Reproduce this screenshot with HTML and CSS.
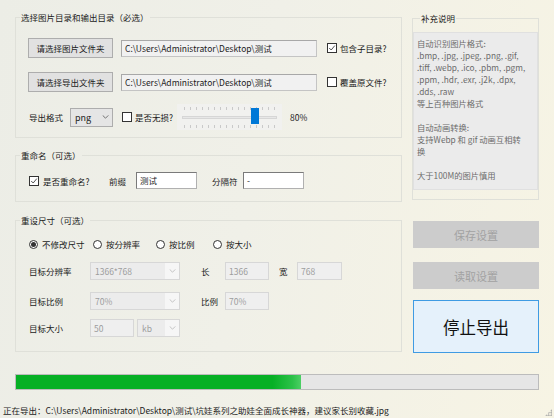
FILE: index.html
```html
<!DOCTYPE html>
<html lang="zh-CN">
<head>
<meta charset="utf-8">
<title>图片格式转换</title>
<link rel="stylesheet" href="styles.css">
</head>
<body>
<div class="window">
  <div class="main">
    <div class="left">
      <fieldset class="group g1">
        <legend>选择图片目录和输出目录（必选）</legend>
        <div class="body b1">
          <div class="row r-pick">
            <div class="btn pick">请选择图片文件夹</div>
            <div class="tb path">C:\Users\Administrator\Desktop\测试</div>
            <span class="chk on"><svg viewBox="0 0 10 10" width="8" height="8"><polyline points="1.5,5 4,7.5 8.5,2" fill="none" stroke="#2a2a2a" stroke-width="1"/></svg></span>
            <span class="chk-l">包含子目录?</span>
          </div>
          <div class="row r-pick r2">
            <div class="btn pick">请选择导出文件夹</div>
            <div class="tb path">C:\Users\Administrator\Desktop\测试</div>
            <span class="chk"></span>
            <span class="chk-l">覆盖原文件?</span>
          </div>
          <div class="row r-fmt">
            <span class="l-fmt">导出格式</span>
            <div class="combo fmt"><span class="cv">png</span><span class="arr"><svg viewBox="0 0 8 5" width="7" height="4"><polyline points="0.5,0.5 4,4 7.5,0.5" fill="none" stroke="#555" stroke-width="1"/></svg></span></div>
            <span class="chk c-loss"></span>
            <span class="chk-l l-loss">是否无损?</span>
            <div class="slider"><div class="track"></div><div class="thumb"></div></div>
            <span class="pct">80%</span>
          </div>
        </div>
      </fieldset>

      <fieldset class="group g2">
        <legend>重命名（可选）</legend>
        <div class="body b2">
          <div class="row r-ren">
            <span class="chk c-ren on"><svg viewBox="0 0 10 10" width="8" height="8"><polyline points="1.5,5 4,7.5 8.5,2" fill="none" stroke="#2a2a2a" stroke-width="1"/></svg></span>
            <span class="l-ren">是否重命名?</span>
            <span class="l-pre">前缀</span>
            <div class="tb edit w-pre">测试</div>
            <span class="l-sep">分隔符</span>
            <div class="tb edit w-sep">-</div>
          </div>
        </div>
      </fieldset>

      <fieldset class="group g3">
        <legend>重设尺寸（可选）</legend>
        <div class="body b3">
          <div class="row r-radio">
            <span class="radio on"></span><span class="rl w1">不修改尺寸</span>
            <span class="radio"></span><span class="rl w2">按分辨率</span>
            <span class="radio"></span><span class="rl w3">按比例</span>
            <span class="radio"></span><span class="rl">按大小</span>
          </div>
          <div class="row r-size r-res">
            <span class="l-target">目标分辨率</span>
            <div class="combo dis w-combo"><span class="cv">1366*768</span><span class="arr"><svg viewBox="0 0 8 5" width="7" height="4"><polyline points="0.5,0.5 4,4 7.5,0.5" fill="none" stroke="#b8b8b8" stroke-width="1"/></svg></span></div>
            <span class="l-short">长</span>
            <div class="tb dis w44">1366</div>
            <span class="l-wide">宽</span>
            <div class="tb dis w45">768</div>
          </div>
          <div class="row r-size r-ratio">
            <span class="l-target">目标比例</span>
            <div class="combo dis w-combo"><span class="cv">70%</span><span class="arr"><svg viewBox="0 0 8 5" width="7" height="4"><polyline points="0.5,0.5 4,4 7.5,0.5" fill="none" stroke="#b8b8b8" stroke-width="1"/></svg></span></div>
            <span class="l-short">比例</span>
            <div class="tb dis w44">70%</div>
          </div>
          <div class="row r-size r-kb">
            <span class="l-target">目标大小</span>
            <div class="tb dis w44">50</div>
            <div class="combo dis w-unit"><span class="cv">kb</span><span class="arr"><svg viewBox="0 0 8 5" width="7" height="4"><polyline points="0.5,0.5 4,4 7.5,0.5" fill="none" stroke="#b8b8b8" stroke-width="1"/></svg></span></div>
          </div>
        </div>
      </fieldset>
    </div>

    <div class="right">
      <fieldset class="group notes">
        <legend>补充说明</legend>
        <div class="note-box">自动识别图片格式:<br>.bmp, .jpg, .jpeg, .png, .gif,<br>.tiff, .webp, .ico, .pbm, .pgm,<br>.ppm, .hdr, .exr, .j2k, .dpx,<br>.dds, .raw<br>等上百种图片格式<br><br>自动动画转换:<br>支持Webp 和 gif 动画互相转<br>换<br><br>大于100M的图片慎用</div>
      </fieldset>
      <div class="btn side dis-btn save">保存设置</div>
      <div class="btn side dis-btn load">读取设置</div>
      <div class="btn side stop">停止导出</div>
    </div>
  </div>

  <div class="progress"><div class="fill" style="width:54.6%"></div></div>
  <div class="status">正在导出：C:\Users\Administrator\Desktop\测试\坑娃系列之助娃全面成长神器，建议家长别收藏.jpg</div>
  <div class="grip"></div>
</div>
</body>
</html>
```

FILE: styles.css
```css
html, body {
  margin: 0;
  padding: 0;
}
body {
  width: 554px;
  height: 418px;
  overflow: hidden;
  background: linear-gradient(100deg, #ecede6 0%, #f0f0e8 45%, #f7f4e4 100%);
  font-family: "Noto Sans CJK SC", "Noto Sans", sans-serif;
  font-size: 8.5px;
  color: #1b1b1b;
}
.window {
  position: relative;
  height: 418px;
}
.main {
  display: flex;
  gap: 10px;
  padding: 9px 0 0 15px;
}
.left {
  width: 387px;
  display: flex;
  flex-direction: column;
}
.right {
  width: 127px;
  display: flex;
  flex-direction: column;
  margin-top: 1px;
}

/* group boxes */
.group {
  margin: 0;
  padding: 0;
  min-width: 0;
  border: 1px solid #dfe0d9;
}
.group legend {
  margin-left: 4px;
  padding: 0 1px;
  line-height: 16px;
  height: 16px;
}
.g2 { margin-top: 9px; }
.g3 { margin-top: 10px; }

.row {
  display: flex;
  align-items: center;
  white-space: nowrap;
}
.row > * { flex: none; }

/* group 1 */
.b1 { padding: 13px 0 7px 12px; }
.r-pick { height: 20px; }
.r2 { margin-top: 14px; }
.btn {
  box-sizing: border-box;
  display: flex;
  align-items: center;
  justify-content: center;
  background: #e1e1e1;
  border: 1px solid #adadad;
}
.pick { width: 85px; height: 20px; }
.tb {
  box-sizing: border-box;
  height: 17px;
  line-height: 15px;
  padding-left: 2px;
  border: 1px solid #a9a9a9;
  overflow: hidden;
}
.path {
  width: 196px;
  margin-left: 8px;
  background: #f1f1f1;
  border-color: #a8a8a8 #c4c4c4 #c4c4c4 #a8a8a8;
  padding-left: 3px;
}
.chk {
  box-sizing: border-box;
  width: 10px;
  height: 10px;
  margin-left: 10px;
  background: #fff;
  border: 1px solid #333;
  display: flex;
  align-items: center;
  justify-content: center;
}
.chk-l { margin-left: 3px; }

.r-fmt { height: 26px; margin-top: 12px; }
.l-fmt { width: 41px; margin-left: 1px; }
.combo {
  box-sizing: border-box;
  height: 19px;
  display: flex;
  align-items: center;
  border: 1px solid #adadad;
  background: #e5e5e5;
}
.combo .cv {
  flex: 1;
  padding-left: 4px;
  overflow: hidden;
}
.combo .arr {
  width: 14px;
  height: 100%;
  display: flex;
  align-items: center;
  justify-content: center;
}
.fmt { width: 43px; font-size: 9px; }
.c-loss { margin-left: 9px; }
.l-loss { width: 42px; }
.slider {
  position: relative;
  width: 105px;
  height: 26px;
  background-color: #f1f1ef;
  background-image:
    repeating-linear-gradient(90deg, #c9c9c9 0 1px, transparent 1px 6px),
    repeating-linear-gradient(90deg, #c9c9c9 0 1px, transparent 1px 6px);
  background-size: 92px 3px, 92px 3px;
  background-position: 7px 3px, 7px 21px;
  background-repeat: no-repeat;
}
.track {
  margin: 12px 0 0 5px;
  width: 95px;
  height: 3px;
  box-sizing: border-box;
  background: #e7e7e7;
  border: 1px solid #d6d6d6;
}
.thumb {
  position: absolute;
  left: 74px;
  top: 4px;
  width: 8px;
  height: 16px;
  background: #0078d7;
}
.pct { margin-left: 8px; }

/* group 2 */
.b2 { padding: 9px 0 12px 0; }
.r-ren { height: 17px; }
.c-ren { margin-left: 13px; }
.l-ren { width: 66px; margin-left: 4px; }
.l-pre { width: 27px; }
.edit {
  background: #fff;
  border-color: #7a7a7a #b0b0b0 #b0b0b0 #7a7a7a;
  padding-left: 3px;
}
.w-pre { width: 61px; }
.l-sep { width: 31px; margin-left: 15px; }
.w-sep { width: 61px; }

/* group 3 */
.b3 { padding: 8px 0 14px 0; }
.r-radio { height: 16px; }
.radio {
  box-sizing: border-box;
  width: 9px;
  height: 9px;
  border: 1px solid #333;
  border-radius: 50%;
  background: #fff;
  display: flex;
  align-items: center;
  justify-content: center;
}
.radio.on::after {
  content: "";
  width: 5px;
  height: 5px;
  border-radius: 50%;
  background: #333;
}
.r-radio .radio:first-child { margin-left: 13px; }
.rl { margin-left: 4px; }
.w1 { width: 51px; }
.w2 { width: 50px; }
.w3 { width: 44px; }

.r-size { height: 18px; }
.r-res { margin-top: 10px; }
.r-ratio { margin-top: 12px; }
.r-kb { margin-top: 9px; }
.l-target { width: 61px; margin-left: 13px; }
.dis {
  background: #efefef;
  border: 1px solid #d7d7d7;
  color: #9d9d9d;
}
.tb.dis { height: 18px; line-height: 16px; padding-left: 3px; }
.combo.dis { height: 18px; }
.combo.dis .cv { background: #ececec; height: 100%; line-height: 16px; }
.combo.dis .arr { background: #f6f6f6; }
.w-combo { width: 90px; }
.w-unit { width: 43px; margin-left: 3px; }
.w44 { width: 44px; }
.w45 { width: 45px; }
.l-short { width: 24px; margin-left: 21px; }
.l-wide { width: 18px; margin-left: 10px; }

/* right column */
.notes legend { margin-left: 7px; }
.notes { padding-bottom: 9px; }
.note-box {
  box-sizing: border-box;
  margin-top: 6px;
  height: 158px;
  padding: 4px 0 0 3px;
  background: #ebebeb;
  border: 1px solid #e0e0e0;
  color: #6b6b6b;
  line-height: 12px;
  font-size: 8.3px;
  white-space: nowrap;
}
.side {
  width: 126px;
  margin-left: 1px;
}
.dis-btn {
  height: 27px;
  background: #cccccc;
  border: 1px solid #cccccc;
  color: #a2a2a2;
  font-size: 11px;
}
.save { margin-top: 21px; }
.load { margin-top: 14px; }
.stop {
  margin-top: 11px;
  height: 53px;
  background: #e5f1fb;
  border: 1px solid #3f9be3;
  font-size: 16.5px;
  color: #111;
}

/* progress & status */
.progress {
  box-sizing: border-box;
  margin: 21px 0 0 15px;
  width: 524px;
  height: 16px;
  background: #e6e6e6;
  border: 1px solid #bcbcbc;
}
.fill {
  height: 100%;
  background: linear-gradient(90deg, #06b025 0%, #06b025 90%, #2cc149 97%, #4ccf64 100%);
}
.status {
  margin-top: 12px;
  padding-left: 3px;
  line-height: 16px;
  height: 16px;
  white-space: nowrap;
}
.grip {
  position: absolute;
  right: 2px;
  bottom: 2px;
  width: 7px;
  height: 7px;
  background:
    radial-gradient(circle, #a9a9a9 0.8px, transparent 1px) 0 0 / 2.5px 2.5px;
  clip-path: polygon(100% 0, 100% 100%, 0 100%);
}
```
